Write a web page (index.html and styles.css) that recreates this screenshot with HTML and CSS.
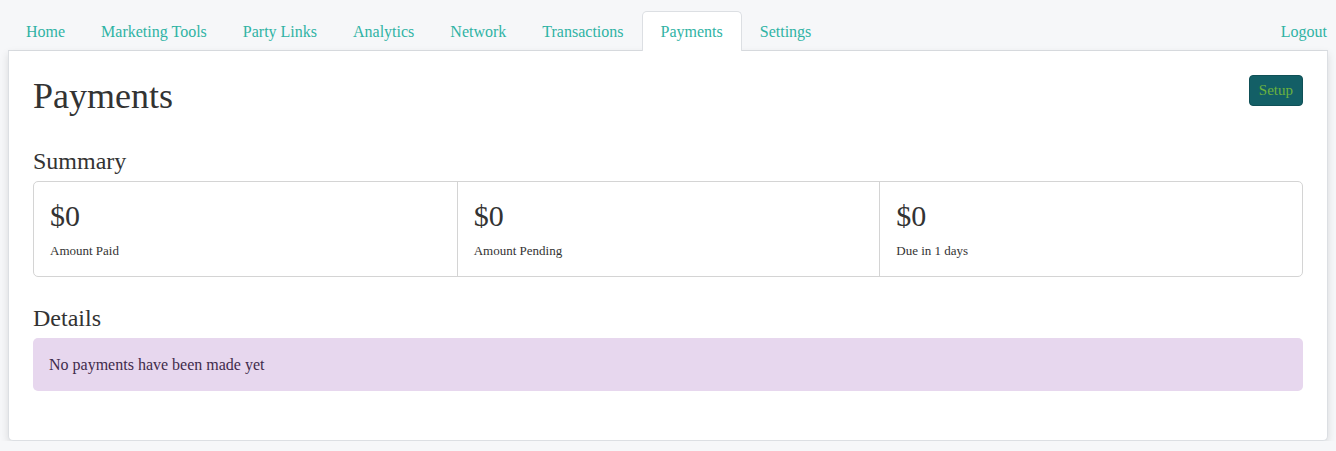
FILE: index.html
```html
<!DOCTYPE html>
<html lang="en">
<head>
    <meta charset="UTF-8">
    <meta name="viewport" content="width=device-width, initial-scale=1.0">
    <title>Payments</title>
    <link rel="stylesheet" href="styles.css">
</head>
<body>
    <nav class="tabs">
        <a class="tab" href="#">Home</a>
        <a class="tab" href="#">Marketing Tools</a>
        <a class="tab" href="#">Party Links</a>
        <a class="tab" href="#">Analytics</a>
        <a class="tab" href="#">Network</a>
        <a class="tab" href="#">Transactions</a>
        <a class="tab active" href="#">Payments</a>
        <a class="tab" href="#">Settings</a>
        <a class="tab logout" href="#">Logout</a>
    </nav>
    <div class="card">
        <div class="page-head">
            <h1>Payments</h1>
            <button class="btn-setup">Setup</button>
        </div>

        <h2>Summary</h2>
        <div class="stats">
            <div class="stat">
                <div class="stat-value">$0</div>
                <div class="stat-label">Amount Paid</div>
            </div>
            <div class="stat">
                <div class="stat-value">$0</div>
                <div class="stat-label">Amount Pending</div>
            </div>
            <div class="stat">
                <div class="stat-value">$0</div>
                <div class="stat-label">Due in 1 days</div>
            </div>
        </div>

        <h2>Details</h2>
        <div class="alert">No payments have been made yet</div>
    </div>
</body>
</html>
```

FILE: styles.css
```css
body {
    font-family: "Liberation Serif", "Times New Roman", serif;
    margin: 0;
    padding: 0 8px;
    background-color: #f6f7f9;
    color: #333;
}
.tabs {
    display: flex;
    align-items: flex-end;
    padding-top: 11px;
    border-bottom: 1px solid #dcdfe3;
}
.tab {
    display: block;
    padding: 8px 17px 7px;
    line-height: 24px;
    font-size: 16px;
    color: #2fb3a4;
    text-decoration: none;
    border: 1px solid transparent;
    border-bottom: none;
    border-radius: 5px 5px 0 0;
    margin-bottom: -1px;
}
.tab.active {
    background: white;
    border-color: #dcdfe3;
    padding-left: 18px;
    padding-right: 18px;
}
.tab.logout {
    margin-left: auto;
    padding-right: 0;
}
.card {
    background: white;
    padding: 24px 24px 49px;
    border: 1px solid #dcdfe3;
    border-top: none;
    border-radius: 0 0 5px 5px;
    box-shadow: 0 3px 8px rgba(0, 0, 0, 0.12);
}
.page-head {
    display: flex;
    justify-content: space-between;
    align-items: flex-start;
}
h1 {
    font-size: 36px;
    font-weight: normal;
    margin: 0 0 30px;
    line-height: 42px;
    color: #333;
}
.btn-setup {
    font-family: inherit;
    font-size: 15px;
    background: #135f66;
    color: #6cb33e;
    border: 1px solid #0f5057;
    border-radius: 4px;
    padding: 6px 9px;
    line-height: 17px;
}
h2 {
    font-size: 24px;
    font-weight: normal;
    margin: 0 0 5px;
    line-height: 29px;
    color: #333;
}
.stats {
    display: grid;
    grid-template-columns: repeat(3, 1fr);
    border: 1px solid #d4d4d4;
    border-radius: 5px;
    margin-bottom: 27px;
}
.stat {
    padding: 16px 16px 14px;
}
.stat + .stat {
    border-left: 1px solid #d4d4d4;
}
.stat-value {
    font-size: 30px;
    line-height: 36px;
    margin-bottom: 6px;
}
.stat-label {
    font-size: 13px;
    line-height: 22px;
}
.alert {
    background: #e7d7ee;
    color: #3f2b4b;
    border-radius: 5px;
    padding: 15px 16px;
    font-size: 16px;
    line-height: 23px;
}
```
